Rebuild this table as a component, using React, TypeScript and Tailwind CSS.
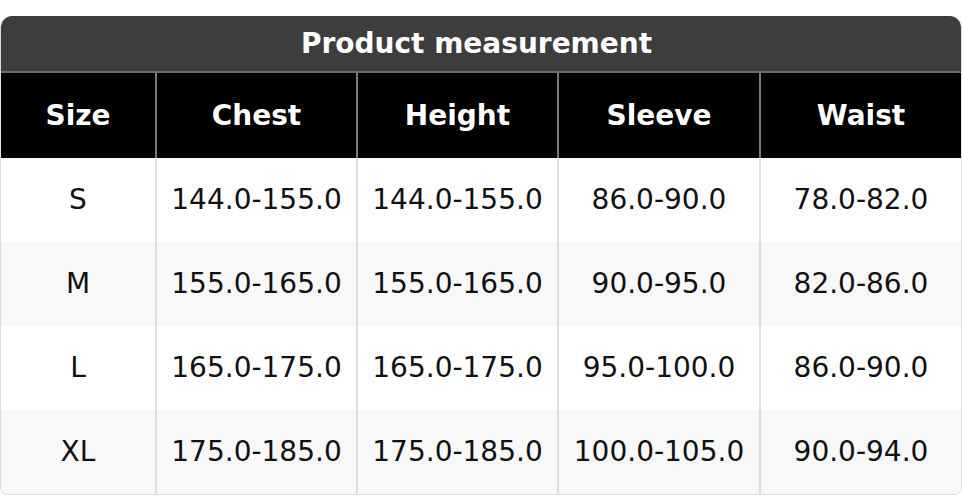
const rows = [
    ['S', '144.0-155.0', '144.0-155.0', '86.0-90.0', '78.0-82.0'],
    ['M', '155.0-165.0', '155.0-165.0', '90.0-95.0', '82.0-86.0'],
    ['L', '165.0-175.0', '165.0-175.0', '95.0-100.0', '86.0-90.0'],
    ['XL', '175.0-185.0', '175.0-185.0', '100.0-105.0', '90.0-94.0'],
];

const headers = ['Size', 'Chest', 'Height', 'Sleeve', 'Waist'];

export default function App() {
    return (
        <div className="w-[962px] h-[496px] bg-white pt-[16px] font-['DejaVu_Sans',sans-serif]">
            <div className="w-[962px] rounded-t-[12px] rounded-b-[8px] overflow-hidden border-x border-b border-[#dcdcdc]">
                <div className="h-[57px] bg-[#3d3d3d] border-b-2 border-[#6a6a6a] flex items-center justify-center pr-[9px] text-white font-bold text-[28px]">
                    Product measurement
                </div>
                <div className="grid grid-cols-[154px_201px_201px_202px_1fr] h-[85px] bg-black">
                    {headers.map((h, i) => (
                        <div
                            key={h}
                            className={`flex items-center justify-center text-white font-bold text-[28px] ${i > 0 ? 'border-l-2 border-[#7a7a7a]' : ''}`}
                        >
                            {h}
                        </div>
                    ))}
                </div>
                {rows.map((r, ri) => (
                    <div
                        key={r[0]}
                        className={`grid grid-cols-[154px_201px_201px_202px_1fr] h-[84px] ${ri % 2 === 1 ? 'bg-[#f8f8f8]' : 'bg-white'}`}
                    >
                        {r.map((c, i) => (
                            <div
                                key={i}
                                className={`flex items-center justify-center text-[#111] text-[28px] ${i > 0 ? 'border-l-2 border-[#dedede]' : ''}`}
                            >
                                {c}
                            </div>
                        ))}
                    </div>
                ))}
            </div>
        </div>
    );
}
